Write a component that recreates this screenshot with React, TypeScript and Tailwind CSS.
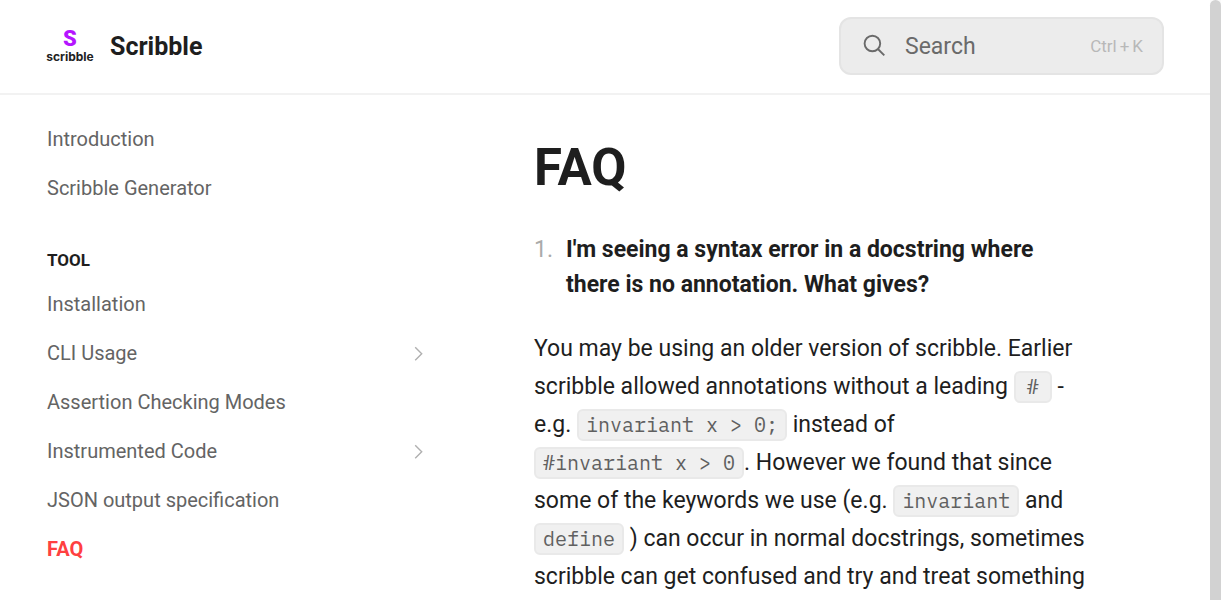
import { ReactNode } from "react";

type Item = { label: string; expandable?: boolean; active?: boolean };

const intro: Item[] = [{ label: "Introduction" }, { label: "Scribble Generator" }];

const tool: Item[] = [
  { label: "Installation" },
  { label: "CLI Usage", expandable: true },
  { label: "Assertion Checking Modes" },
  { label: "Instrumented Code", expandable: true },
  { label: "JSON output specification" },
  { label: "FAQ", active: true },
];

function Chevron() {
  return (
    <svg aria-hidden="true" viewBox="0 0 12 16" className="h-4 w-3 text-[#b0b0b0]" fill="none" stroke="currentColor" strokeWidth="1.4">
      <path d="M2.2 2.2 8.7 8.7 2.2 15.2" />
    </svg>
  );
}

function NavList({ items }: { items: Item[] }) {
  return (
    <ul>
      {items.map((item) => (
        <li key={item.label}>
          <a
            href="#"
            aria-current={item.active ? "page" : undefined}
            className={
              item.active
                ? "flex h-[49px] items-center justify-between font-bold text-[#ff4040]"
                : "flex h-[49px] items-center justify-between text-[#646464]"
            }
          >
            {item.label}
            {item.expandable && <Chevron />}
          </a>
        </li>
      ))}
    </ul>
  );
}

function Code({ children }: { children: ReactNode }) {
  return (
    <code className="inline-block min-w-[38px] rounded-md border-2 border-[#e9e9e9] bg-[#f0f0f0] px-[7px] text-center font-['IBM_Plex_Mono','Liberation_Mono',monospace] text-[20px] leading-7 whitespace-nowrap text-[#606060]">
      {children}
    </code>
  );
}

function Logo() {
  return (
    <span className="flex w-12 flex-col items-center">
      <span className="text-[22px] leading-5 font-black text-[#b515ff]">S</span>
      <span className="font-['Inter',sans-serif] text-[12px] leading-4 font-bold text-[#222222]">scribble</span>
    </span>
  );
}

export default function App() {
  return (
    <div className="flex h-screen overflow-hidden bg-white font-['Roboto',sans-serif] text-[#1e1e1e]">
      <div className="min-w-0 flex-1">
        <header className="flex items-center justify-between border-b-2 border-[#f2f2f2] pt-[17px] pr-[46px] pb-[18px] pl-[46px]">
          <a href="#" className="flex items-center gap-4 pt-0.5">
            <Logo />
            <span className="text-[25px] leading-8 font-bold">Scribble</span>
          </a>
          <button type="button" className="flex h-[58px] w-[325px] items-center rounded-xl border-2 border-[#e4e4e4] bg-[#ececec] pr-[19px] pl-[22px]">
            <svg aria-hidden="true" viewBox="0 0 24 24" className="size-6 text-[#6a6a6a]" fill="none" stroke="currentColor" strokeWidth="1.9">
              <circle cx="9.4" cy="9.5" r="7.8" />
              <path d="m14.9 15 6.4 6.4" />
            </svg>
            <span className="ml-[18px] pt-0.5 text-[23px] text-[#6a6a6a]">Search</span>
            <kbd className="ml-auto flex gap-[3px] pt-0.5 font-['Roboto',sans-serif] text-[17px] text-[#b8b8b8]">
              <span>Ctrl</span>
              <span>+</span>
              <span>K</span>
            </kbd>
          </button>
        </header>
        <div className="flex">
          <nav aria-label="Documentation" className="w-[425px] shrink-0 pt-[19px] pl-[47px] text-[20px]">
            <NavList items={intro} />
            <h2 className="mt-9 mb-[7px] text-[17px] leading-6 font-bold">TOOL</h2>
            <NavList items={tool} />
          </nav>
          <main className="min-w-0 flex-1 pt-[43px] pr-[120px] pl-[109px]">
            <h1 className="text-[51px] leading-[60px] font-bold">FAQ</h1>
            <ol className="mt-[34px]">
              <li className="flex gap-[13px] text-[23px] leading-[35px]">
                <span className="text-[#aaaaaa]">1.</span>
                <strong className="font-bold">I'm seeing a syntax error in a docstring where there is no annotation. What gives?</strong>
              </li>
            </ol>
            <p className="mt-7 text-[23px] leading-[38px]">
              You may be using an older version of scribble. Earlier scribble allowed annotations without a leading{" "}
              <Code>#</Code> - e.g. <Code>invariant x &gt; 0;</Code> instead of <Code>#invariant x &gt; 0</Code>. However we
              found that since some of the keywords we use (e.g. <Code>invariant</Code> and <Code>define</Code> ) can occur in
              normal docstrings, sometimes scribble can get confused and try and treat something
            </p>
          </main>
        </div>
      </div>
      <div aria-hidden="true" className="w-[11px] shrink-0 bg-[#fafafa]">
        <div className="h-full rounded-t-full bg-[#d2d2d2]" />
      </div>
    </div>
  );
}
